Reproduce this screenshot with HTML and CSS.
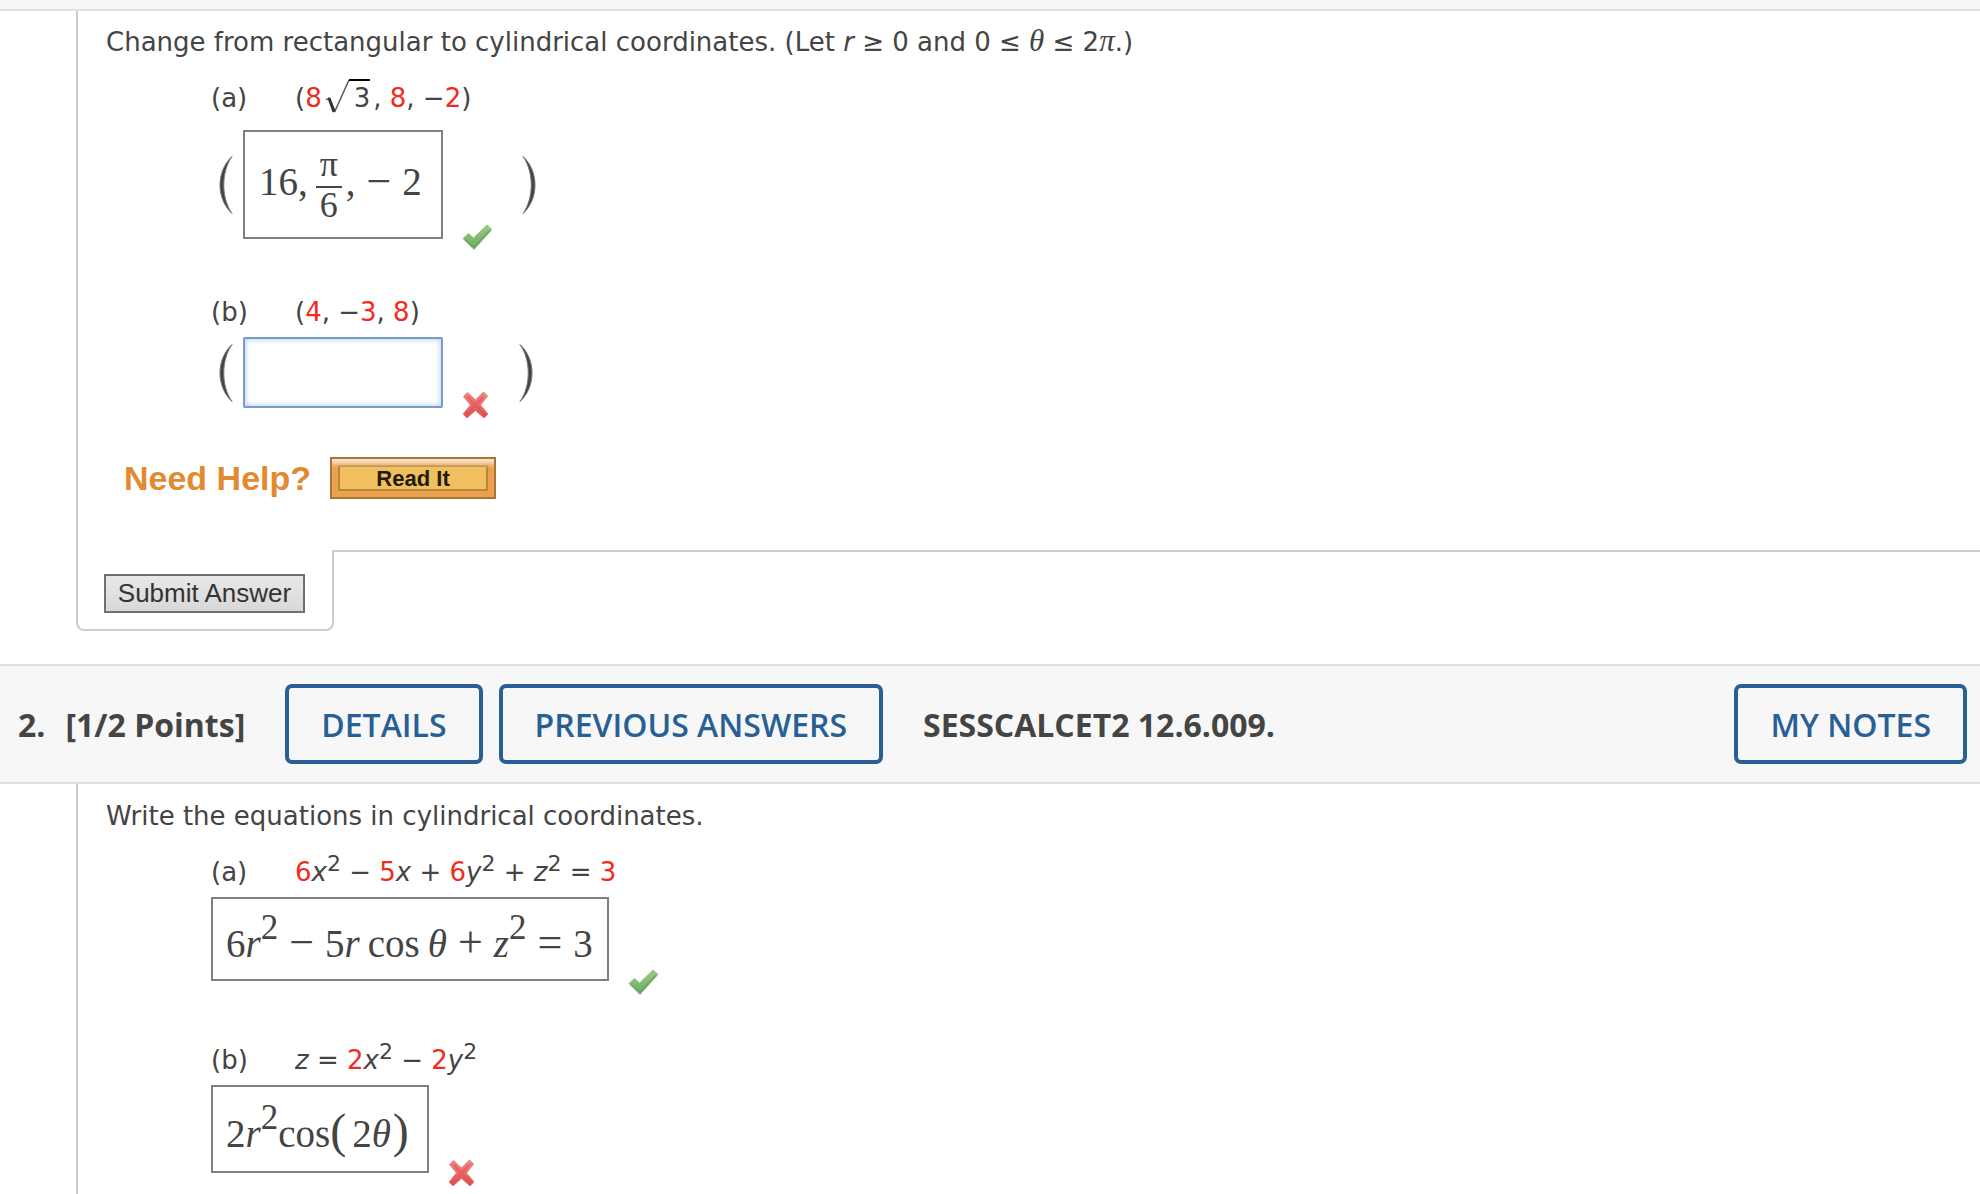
FILE: index.html
```html
<!DOCTYPE html>
<html lang="en">
<head>
    <meta charset="UTF-8">
    <meta name="viewport" content="width=device-width, initial-scale=1.0">
    <title>Cylindrical Coordinates</title>
    <link rel="stylesheet" href="styles.css">
</head>
<body>

    <!-- shared shapes -->
    <svg class="defs" width="0" height="0" aria-hidden="true">
        <defs>
            <linearGradient id="green" x1="0" y1="0" x2="0" y2="1">
                <stop offset="0" stop-color="#9ccb8c"/>
                <stop offset="1" stop-color="#6cab5b"/>
            </linearGradient>
            <linearGradient id="red" x1="0" y1="0" x2="0" y2="1">
                <stop offset="0" stop-color="#f08a88"/>
                <stop offset="1" stop-color="#df4a48"/>
            </linearGradient>
        </defs>
        <symbol id="check" viewBox="0 0 30 26">
            <path d="M1 14.500 L6.500 9.500 L11.500 14 L25 1 L30 5.500 L12 25.500 Z" fill="url(#green)" stroke="#8fc380" stroke-width="1" stroke-linejoin="round"/>
            <path d="M3 15.500 L12 23.500 L28 6" fill="none" stroke="#5c9a4c" stroke-width="1.500" opacity=".6"/>
        </symbol>
        <symbol id="cross" viewBox="0 0 27 28">
            <path d="M1.500 5.500 L5.500 1.500 L13.500 9 L21.500 1 L25.500 5 L18.500 14 L26 23 L22 27 L13.500 19.500 L5 27 L1 23 L8.500 14 Z" fill="url(#red)" stroke="#ea7a78" stroke-width="1" stroke-linejoin="round"/>
            <path d="M5.500 5.500 L21.500 23 M21.500 5.500 L5.500 23" stroke="#e35553" stroke-width="2" opacity=".6"/>
        </symbol>
        <symbol id="paren" viewBox="0 0 14 58">
            <path d="M13 0.500 C-3 15 -3 43 13 57.500 C2 42 2 16 13 0.500 Z" fill="#444" stroke="#777" stroke-width="1"/>
        </symbol>
    </svg>

    <div class="question-top"></div>

    <div class="question-body">
        <div class="content">
            <p class="statement">Change from rectangular to cylindrical coordinates. (Let <i>r</i> ≥ 0 and 0 ≤ <i class="greek">θ</i> ≤ 2<i class="greek">π</i>.)</p>

            <div class="part">
                <div class="prompt tall">
                    <span class="label">(a)</span>
                    <span>(<b>8</b><svg class="radical" width="45" height="36" viewBox="0 0 45 36"><path d="M1 21 L4 19 L10 32 L24 1" fill="none" stroke="#555" stroke-width="1.500"/><path d="M4 19 L9 33" stroke="#333" stroke-width="3"/><path d="M24 1 H45" stroke="#000" stroke-width="2"/></svg><span class="radicand">3</span>, <b>8</b>, −<b>2</b>)</span>
                </div>
                <div class="answer coords">
                    <svg class="paren" width="14" height="58"><use href="#paren"/></svg>
                    <div class="mathbox wide">
                        <span>16,</span>
                        <span class="frac"><span class="num">π</span><span class="den">6</span></span>
                        <span>,</span>
                        <span class="op">−</span>
                        <span>2</span>
                    </div>
                    <svg class="mark" width="30" height="26" role="img" aria-label="correct"><use href="#check"/></svg>
                    <svg class="paren close" width="14" height="58"><use href="#paren" transform="matrix(-1 0 0 1 14 0)"/></svg>
                </div>
            </div>

            <div class="part">
                <div class="prompt">
                    <span class="label">(b)</span>
                    <span>(<b>4</b>, −<b>3</b>, <b>8</b>)</span>
                </div>
                <div class="answer coords">
                    <svg class="paren" width="14" height="58"><use href="#paren"/></svg>
                    <input type="text" class="mathinput" aria-label="Answer for part b">
                    <svg class="mark" width="27" height="28" role="img" aria-label="incorrect"><use href="#cross"/></svg>
                    <svg class="paren close" width="14" height="58"><use href="#paren" transform="matrix(-1 0 0 1 14 0)"/></svg>
                </div>
            </div>

            <div class="help">
                <span>Need Help?</span>
                <button type="button" class="read-it">Read It</button>
            </div>
        </div>
        <div class="question-end">
            <div class="submit-tab">
                <button type="submit" class="submit">Submit Answer</button>
            </div>
            <div class="end-line"></div>
        </div>
    </div>

    <div class="question-header">
        <span class="number">2.</span>
        <span class="points">[1/2 Points]</span>
        <button type="button" class="btn">DETAILS</button>
        <button type="button" class="btn">PREVIOUS ANSWERS</button>
        <span class="source">SESSCALCET2 12.6.009.</span>
        <button type="button" class="btn notes">MY NOTES</button>
    </div>

    <div class="question-body second">
        <div class="content">
            <p class="statement">Write the equations in cylindrical coordinates.</p>

            <div class="part">
                <div class="prompt">
                    <span class="label">(a)</span>
                    <span><b>6</b><i>x</i><sup>2</sup> − <b>5</b><i>x</i> + <b>6</b><i>y</i><sup>2</sup> + <i>z</i><sup>2</sup> = <b>3</b></span>
                </div>
                <div class="answer">
                    <div class="mathbox">
                        <span>6<i>r</i><sup>2</sup></span>
                        <span class="op">−</span>
                        <span>5<i>r</i></span>
                        <span class="fn">cos</span>
                        <span><i>θ</i></span>
                        <span class="op">+</span>
                        <span><i>z</i><sup>2</sup></span>
                        <span class="op">=</span>
                        <span>3</span>
                    </div>
                    <svg class="mark" width="30" height="26" role="img" aria-label="correct"><use href="#check"/></svg>
                </div>
            </div>

            <div class="part">
                <div class="prompt">
                    <span class="label">(b)</span>
                    <span><i>z</i> = <b>2</b><i>x</i><sup>2</sup> − <b>2</b><i>y</i><sup>2</sup></span>
                </div>
                <div class="answer">
                    <div class="mathbox tall">
                        <span>2<i>r</i><sup>2</sup>cos</span>
                        <span class="big">(</span>
                        <span class="arg">2<i>θ</i></span>
                        <span class="big">)</span>
                    </div>
                    <svg class="mark" width="27" height="28" role="img" aria-label="incorrect"><use href="#cross"/></svg>
                </div>
            </div>
        </div>
    </div>

</body>
</html>
```
FILE: styles.css
```css
* {
    box-sizing: border-box;
}
body {
    margin: 0;
    background: #fff;
    color: #444;
    font-family: Verdana, "DejaVu Sans", sans-serif;
    font-size: 26px;
    line-height: 32px;
}
.defs {
    display: block;
}
.question-top {
    height: 11px;
    background: #f7f7f7;
    border-bottom: 2px solid #e0e0e0;
}
.question-body {
    margin-left: 76px;
}
.content {
    padding: 15px 28px 51px;
    border-left: 2px solid #ccc;
}
.second .content {
    padding: 16px 28px 21px;
}
.statement {
    margin: 0 0 24px;
}
.greek {
    font-family: "Liberation Serif", serif;
    font-size: 31px;
    line-height: 0;
}
.part {
    margin-left: 105px;
    margin-bottom: 57px;
}
.second .part {
    margin-bottom: 63px;
}
.second .part:last-child {
    margin-bottom: 0;
}
.prompt {
    display: flex;
    margin-bottom: 9px;
    white-space: pre;
}
.prompt.tall {
    margin-bottom: 16px;
}
.prompt b {
    font-weight: normal;
    color: #f02d1d;
}
.label {
    width: 84px;
}
sup {
    font-size: 22px;
    line-height: 0;
    vertical-align: 10px;
}
.radical {
    margin: -12px -16px -8px 3px;
    vertical-align: baseline;
}
.radicand {
    margin-right: 3px;
}
.answer {
    display: flex;
    align-items: center;
}
.coords {
    margin-left: 8px;
}
.paren {
    margin-right: 10px;
}
.paren.close {
    margin: 0 0 0 30px;
}
.mark {
    align-self: flex-end;
    margin: 0 0 -14px 19px;
}
.coords .mark {
    margin-bottom: -11px;
}
.mathbox {
    display: flex;
    align-items: baseline;
    min-height: 84px;
    padding: 22px 14px 0 13px;
    border: 2px solid #808080;
    font-family: "Liberation Serif", serif;
    font-size: 39px;
    line-height: 44px;
}
.mathbox.tall {
    min-height: 88px;
    padding-right: 18px;
}
.mathbox.wide {
    align-items: center;
    width: 200px;
    min-height: 109px;
    padding: 0 14px 6px;
}
.mathbox sup {
    font-size: 35px;
    vertical-align: 18px;
}
.mathbox .op {
    margin: 0 11px;
    font-size: 44px;
}
.mathbox .fn {
    margin: 0 8px;
}
.mathbox .big {
    font-size: 48px;
}
.mathbox .arg {
    margin: 0 2px 0 6px;
}
.frac {
    display: flex;
    flex-direction: column;
    width: 26px;
    margin: 0 4px 0 8px;
    font-size: 36px;
    text-align: center;
}
.num {
    line-height: 44px;
}
.den {
    border-top: 2px solid #444;
    line-height: 34px;
}
.mathinput {
    width: 200px;
    height: 71px;
    padding: 0 14px;
    border: 2px solid #7a9cc4;
    border-radius: 2px;
    box-shadow: inset 0 0 5px 1px #bcd5f5;
    font-family: "Liberation Serif", serif;
    font-size: 39px;
    color: #444;
}
.help {
    display: flex;
    align-items: center;
    margin: -8px 0 0 18px;
    color: #e18a2f;
    font: bold 34px/38px "Liberation Sans", Arial, sans-serif;
}
.read-it {
    width: 166px;
    height: 42px;
    margin-left: 19px;
    padding: 2px 0 0;
    border: 2px solid #a8743a;
    background: #f2bf5e;
    box-shadow: inset 0 8px 5px -3px #f9e3cb, inset 0 0 0 6px #eba04c, inset 0 0 0 8px #b5883f;
    color: #221c0a;
    font: bold 22px "Liberation Sans", Arial, sans-serif;
}
.question-end {
    display: flex;
    margin-bottom: 33px;
}
.submit-tab {
    width: 258px;
    height: 81px;
    padding: 24px 26px 0;
    border: 2px solid #ccc;
    border-top: none;
    border-radius: 0 0 8px 8px;
}
.end-line {
    flex: 1;
    margin-left: -2px;
    border-top: 2px solid #ccc;
}
.submit {
    width: 201px;
    height: 39px;
    padding: 0;
    border: 2px solid #707070;
    background: linear-gradient(#e8e8e8, #d8d8d8);
    color: #333;
    font: 26px "Liberation Sans", Arial, sans-serif;
    white-space: nowrap;
}
.question-header {
    display: flex;
    align-items: center;
    height: 120px;
    padding: 0 13px 0 18px;
    background: #f7f7f7;
    border-top: 2px solid #e0e0e0;
    border-bottom: 2px solid #e0e0e0;
    font: bold 32px "Open Sans", sans-serif;
}
.points {
    margin: 0 40px 0 20px;
}
.btn {
    height: 80px;
    margin-right: 16px;
    padding: 0 32px;
    border: 4px solid #286096;
    border-radius: 7px;
    background: none;
    color: #286096;
    font: 600 32px "Open Sans", sans-serif;
    white-space: nowrap;
}
.source {
    margin-left: 24px;
}
.notes {
    margin: 0 0 0 auto;
}
```
